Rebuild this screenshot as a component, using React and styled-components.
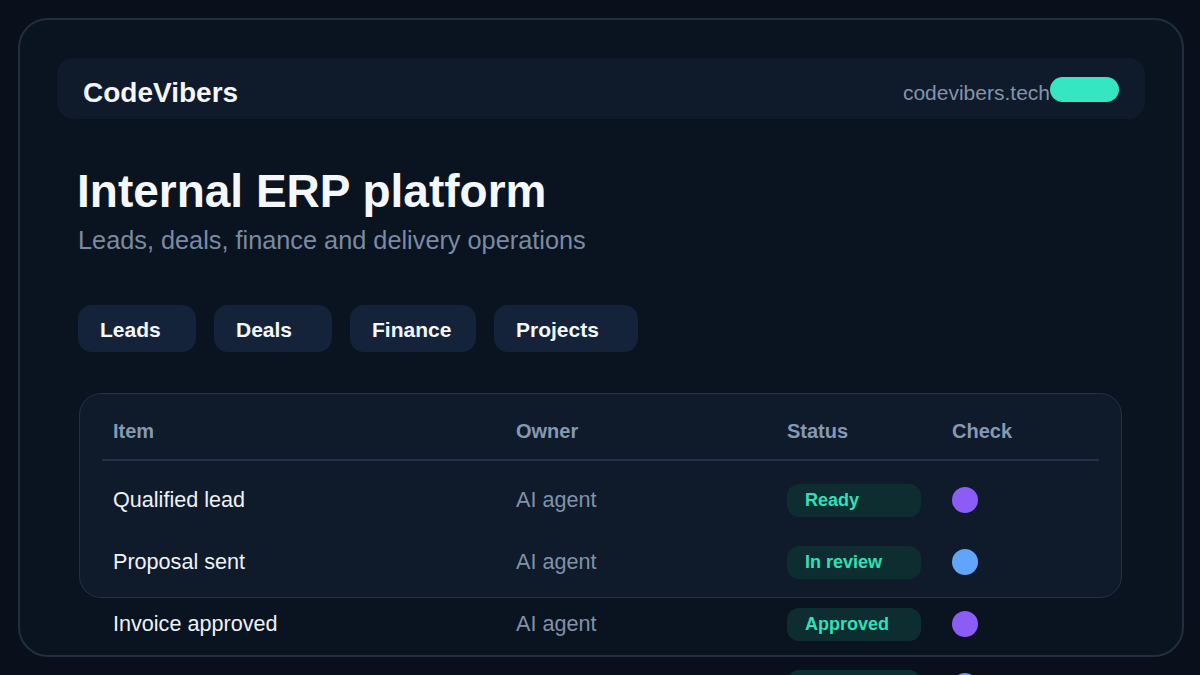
import React from "react";
import styled, { createGlobalStyle } from "styled-components";

const Global = createGlobalStyle`
  html, body { margin: 0; padding: 0; }
  body {
    background: #0a101b;
    font-family: "Liberation Sans", Arial, sans-serif;
    overflow: hidden;
  }
  * { box-sizing: border-box; }
`;

const Frame = styled.div`
  margin: 18px;
  width: 1166px;
  height: 639px;
  border: 2px solid #222e40;
  border-radius: 30px;
  background: #0a1320;
  padding: 38px 37px 0 37px;
`;

const TopBar = styled.header`
  height: 61px;
  border-radius: 16px;
  background: #0f1a2a;
  display: flex;
  align-items: center;
  justify-content: space-between;
  padding: 8px 26px 0 26px;
`;

const Brand = styled.div`
  font-size: 28px;
  font-weight: 700;
  color: #f3f6fa;
`;

const Domain = styled.div`
  display: flex;
  align-items: center;
  font-size: 21px;
  color: #8394ad;
`;

const Pill = styled.span`
  display: block;
  width: 69px;
  height: 25px;
  border-radius: 13px;
  background: #34e6c2;
  margin-top: -7px;
`;

const Content = styled.main`
  padding: 0 23px 0 22px;
`;

const Title = styled.h1`
  margin: 46px 0 0 -2px;
  font-size: 46px;
  line-height: 53px;
  font-weight: 700;
  color: #f4f7fb;
`;

const Subtitle = styled.p`
  margin: 7px 0 0 -1px;
  font-size: 25.3px;
  line-height: 30px;
  color: #7a8ba3;
`;

const Tabs = styled.nav`
  display: flex;
  gap: 18px;
  margin: 50px 0 0 -1px;
`;

const Tab = styled.button`
  width: ${(p) => p.$w}px;
  height: 47px;
  border: none;
  border-radius: 14px;
  background: #14233a;
  color: #f4f7fb;
  font-family: "Liberation Sans", Arial, sans-serif;
  font-size: 21px;
  font-weight: 700;
  text-align: left;
  padding: 2px 0 0 22px;
`;

const Card = styled.section`
  margin-top: 41px;
  height: 205px;
  border: 1px solid #22324a;
  border-radius: 22px;
  background: #0f1a2b;
  padding: 0 22px;
`;

const Row = styled.div`
  display: grid;
  grid-template-columns: 403px 271px 165px 1fr;
  align-items: center;
  height: ${(p) => (p.$head ? "67px" : "62px")};
  padding-top: ${(p) => (p.$head ? "9px" : "0")};
  border-bottom: ${(p) => (p.$head ? "2px solid #233248" : "none")};
  margin-bottom: ${(p) => (p.$head ? "8px" : "0")};
`;

const HeadCell = styled.div`
  padding-left: 11px;
  font-size: 20px;
  font-weight: 700;
  color: #8599b3;
`;

const Cell = styled.div`
  padding-left: 11px;
  font-size: 21.6px;
  color: ${(p) => (p.$muted ? "#8092aa" : "#eef2f7")};
`;

const Slot = styled.div`
  padding-left: 11px;
`;

const Status = styled.span`
  display: flex;
  align-items: center;
  width: 134px;
  height: 33px;
  border-radius: 12px;
  background: #0e2d31;
  color: #2fe0b9;
  font-size: 18px;
  font-weight: 700;
  padding-left: 18px;
`;

const Dot = styled.span`
  display: block;
  width: 26px;
  height: 26px;
  border-radius: 50%;
  background: ${(p) => p.$c};
`;

const tabs = [
  ["Leads", 118],
  ["Deals", 118],
  ["Finance", 126],
  ["Projects", 144],
];

const rows = [
  ["Qualified lead", "AI agent", "Ready", "#8b5cf6"],
  ["Proposal sent", "AI agent", "In review", "#60a5fa"],
  ["Invoice approved", "AI agent", "Approved", "#8b5cf6"],
  ["Project delivered", "AI agent", "Done", "#60a5fa"],
];

export default function App() {
  return (
    <>
      <Global />
      <Frame>
        <TopBar>
          <Brand>CodeVibers</Brand>
          <Domain>
            codevibers.tech
            <Pill />
          </Domain>
        </TopBar>
        <Content>
          <Title>Internal ERP platform</Title>
          <Subtitle>Leads, deals, finance and delivery operations</Subtitle>
          <Tabs>
            {tabs.map(([t, w]) => (
              <Tab key={t} $w={w}>
                {t}
              </Tab>
            ))}
          </Tabs>
          <Card>
            <Row $head>
              <HeadCell>Item</HeadCell>
              <HeadCell>Owner</HeadCell>
              <HeadCell>Status</HeadCell>
              <HeadCell>Check</HeadCell>
            </Row>
            {rows.map(([item, owner, status, c]) => (
              <Row key={item}>
                <Cell>{item}</Cell>
                <Cell $muted>{owner}</Cell>
                <Slot>
                  <Status>{status}</Status>
                </Slot>
                <Slot>
                  <Dot $c={c} />
                </Slot>
              </Row>
            ))}
          </Card>
        </Content>
      </Frame>
    </>
  );
}
